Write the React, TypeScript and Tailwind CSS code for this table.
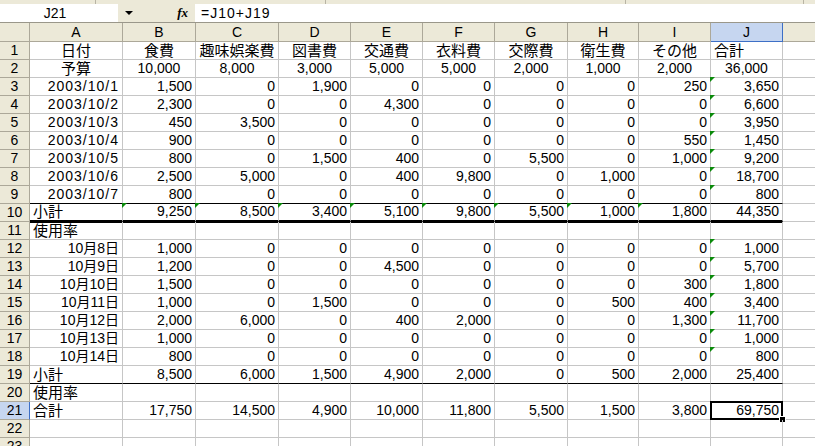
import React from "react";

const LETTERS = ["A", "B", "C", "D", "E", "F", "G", "H", "I", "J"];
const GRID = "grid grid-cols-[30px_93px_73px_83px_72px_72px_72px_73px_71px_72px_72px_1fr]";

const e = ["", "", "", "", "", "", "", "", ""];

const data: string[][] = [
  ["日付", "食費", "趣味娯楽費", "図書費", "交通費", "衣料費", "交際費", "衛生費", "その他", "合計"],
  ["予算", "10,000", "8,000", "3,000", "5,000", "5,000", "2,000", "1,000", "2,000", "36,000"],
  ["2003/10/1", "1,500", "0", "1,900", "0", "0", "0", "0", "250", "3,650"],
  ["2003/10/2", "2,300", "0", "0", "4,300", "0", "0", "0", "0", "6,600"],
  ["2003/10/3", "450", "3,500", "0", "0", "0", "0", "0", "0", "3,950"],
  ["2003/10/4", "900", "0", "0", "0", "0", "0", "0", "550", "1,450"],
  ["2003/10/5", "800", "0", "1,500", "400", "0", "5,500", "0", "1,000", "9,200"],
  ["2003/10/6", "2,500", "5,000", "0", "400", "9,800", "0", "1,000", "0", "18,700"],
  ["2003/10/7", "800", "0", "0", "0", "0", "0", "0", "0", "800"],
  ["小計", "9,250", "8,500", "3,400", "5,100", "9,800", "5,500", "1,000", "1,800", "44,350"],
  ["使用率", ...e],
  ["10月8日", "1,000", "0", "0", "0", "0", "0", "0", "0", "1,000"],
  ["10月9日", "1,200", "0", "0", "4,500", "0", "0", "0", "0", "5,700"],
  ["10月10日", "1,500", "0", "0", "0", "0", "0", "0", "300", "1,800"],
  ["10月11日", "1,000", "0", "1,500", "0", "0", "0", "500", "400", "3,400"],
  ["10月12日", "2,000", "6,000", "0", "400", "2,000", "0", "0", "1,300", "11,700"],
  ["10月13日", "1,000", "0", "0", "0", "0", "0", "0", "0", "1,000"],
  ["10月14日", "800", "0", "0", "0", "0", "0", "0", "0", "800"],
  ["小計", "8,500", "6,000", "1,500", "4,900", "2,000", "0", "500", "2,000", "25,400"],
  ["使用率", ...e],
  ["合計", "17,750", "14,500", "4,900", "10,000", "11,800", "5,500", "1,500", "3,800", "69,750"],
  ["", ...e],
  ["", ...e],
];

// green "error" corner marks
const hasMark = (r: number, c: number) =>
  (c === 9 && ((r >= 3 && r <= 9) || (r >= 12 && r <= 18))) || (r === 10 && c >= 1 && c <= 8);

function align(r: number, c: number, v: string) {
  if (r === 1) return c === 9 ? "justify-start pl-[3px]" : "justify-center";
  if (r === 2) return "justify-center";
  if (c === 0 && !/^\d/.test(v)) return "justify-start pl-[3px]";
  return "justify-end pr-[3px]";
}

function Cell({ r, c, v }: { r: number; c: number; v: string }) {
  const bottom =
    r === 9 || r === 19
      ? "border-b-black"
      : r === 10
      ? "border-b-2 border-b-black shadow-[0_1px_0_#000]"
      : "border-b-[#c6c6c6]";
  const cjkOnly = /[^\x00-\x7f]/.test(v) && !/\d/.test(v);
  const isDate = v.includes("/");
  return (
    <div
      className={`relative h-[18px] border-b border-r border-r-[#c6c6c6] ${bottom} flex items-end ${align(r, c, v)} leading-[17px] whitespace-nowrap ${cjkOnly ? "text-[15px]" : ""} ${isDate ? "tracking-[1px]" : ""}`}
    >
      {hasMark(r, c) && (
        <span className="absolute -left-px -top-px w-0 h-0 border-t-[5px] border-r-[5px] border-t-[#0a8a0a] border-r-transparent" />
      )}
      {v}
      {r === 21 && c === 9 && (
        <span className="absolute -left-px -top-px -right-px -bottom-px border-2 border-black">
          <span className="absolute -right-[4px] -bottom-[4px] w-[5px] h-[5px] bg-black outline outline-1 outline-white" />
        </span>
      )}
    </div>
  );
}

export default function App() {
  return (
    <div className="w-[815px] h-[446px] overflow-hidden bg-white text-black text-[14px] font-['Liberation_Sans','Noto_Sans_CJK_JP',sans-serif]">
      <div className="flex h-[4px] bg-[#ECE9D8]">
        <div className="w-[96px] border-r border-[#b8b4a4]" />
        <div className="w-[230px] border-r border-[#b8b4a4]" />
        <div className="w-[300px] border-r border-[#b8b4a4]" />
        <div className="w-[178px] border-r border-[#b8b4a4]" />
      </div>

      <div className="flex h-[18px] items-stretch bg-[#ECE9D8]">
        <div className="w-[118px] bg-white flex items-center justify-center pr-[8px]">J21</div>
        <div className="w-[22px] flex items-center justify-center">
          <span className="w-0 h-0 border-l-[4px] border-r-[4px] border-t-[4px] border-l-transparent border-r-transparent border-t-black" />
        </div>
        <div className="w-[55px] flex items-center justify-end pr-[7px] font-['Liberation_Serif',serif] italic font-bold text-[13px]">
          fx
        </div>
        <div className="flex-1 bg-white flex items-center pl-[6px] tracking-[1px]">=J10+J19</div>
      </div>
      <div className="h-px bg-[#9a978a]" />

      <div className={GRID}>
        <div className="h-[19px] bg-[#ECE9D8] border-r border-b border-[#aca899]" />
        {LETTERS.map((l) => (
          <div
            key={l}
            className={`h-[19px] flex items-center justify-center border-r border-b ${
              l === "J" ? "bg-[#C6D6F0] border-[#3d6fc6]" : "bg-[#ECE9D8] border-[#aca899]"
            }`}
          >
            {l}
          </div>
        ))}
        <div className="h-[19px] bg-[#ECE9D8] border-b border-[#aca899]" />

        {data.map((row, i) => {
          const r = i + 1;
          return (
            <React.Fragment key={r}>
              <div
                className={`h-[18px] flex items-center justify-center border-b border-r ${
                  r === 21 ? "bg-[#C6D6F0] border-r-[#3d6fc6] border-b-[#aca899]" : "bg-[#ECE9D8] border-[#aca899]"
                }`}
              >
                {r}
              </div>
              {row.map((v, c) => (
                <Cell key={c} r={r} c={c} v={v} />
              ))}
              <div className="h-[18px] border-b border-[#c6c6c6]" />
            </React.Fragment>
          );
        })}
      </div>
    </div>
  );
}
